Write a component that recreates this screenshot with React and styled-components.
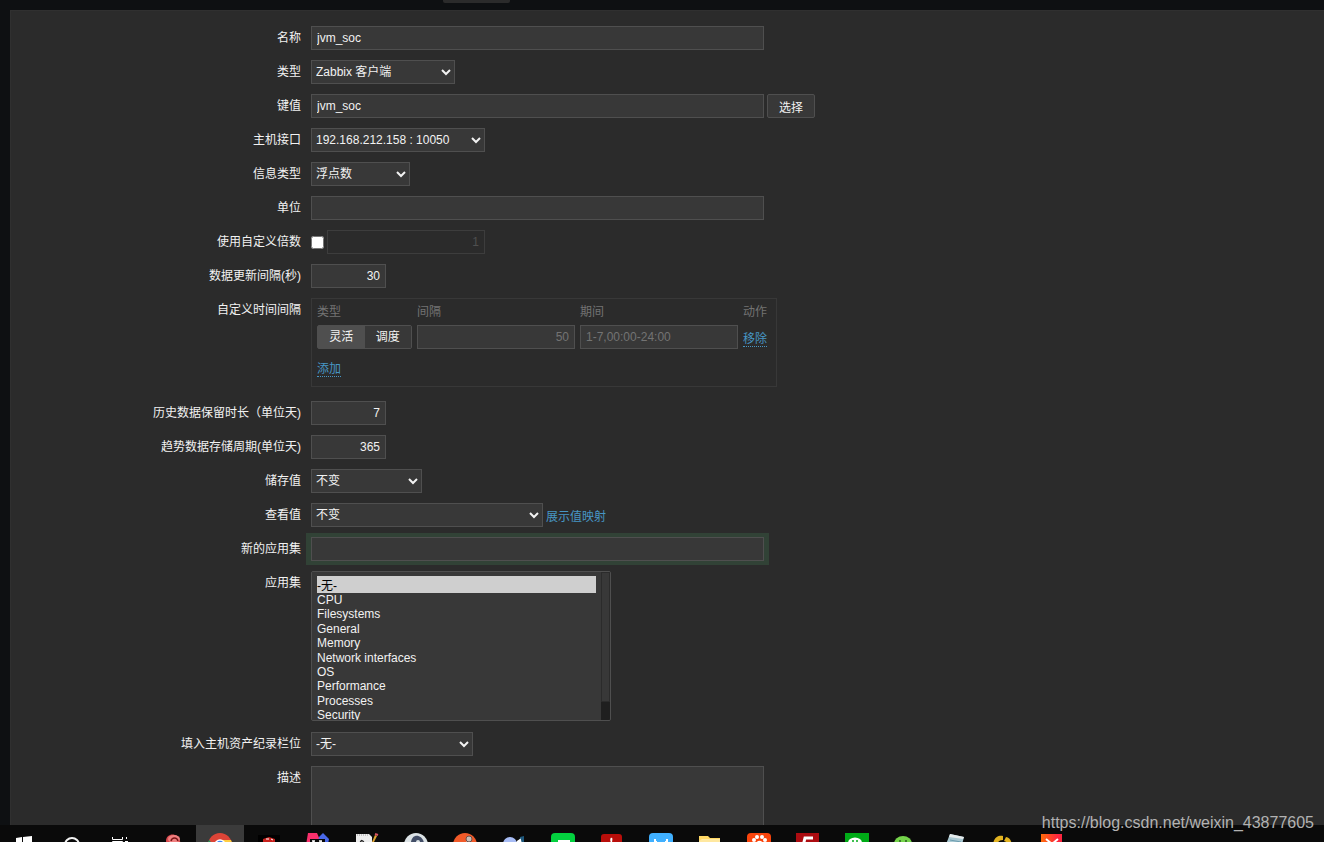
// src/App.jsx
import React from 'react';
import styled, { createGlobalStyle, css } from 'styled-components';

const GlobalStyle = createGlobalStyle`
  *, *::before, *::after {
    box-sizing: border-box;
  }

  body {
    margin: 0;
    background: #0e1012;
    color: #f2f2f2;
    font-family: "Liberation Sans", "Noto Sans CJK SC", sans-serif;
    font-size: 12px;
  }
`;

const Page = styled.div`
  position: relative;
  display: flex;
  flex-direction: column;
  height: 100vh;
  overflow: hidden;
`;

const TabStrip = styled.div`
  flex: none;
  height: 10px;
  padding-left: 443px;
`;

const ActiveTab = styled.div`
  width: 67px;
  height: 3px;
  background: #2b2b2b;
  border-radius: 0 0 2px 2px;
`;

const Panel = styled.main`
  flex: 1;
  min-height: 0;
  margin-left: 10px;
  padding-top: 15px;
  background: #2b2b2b;
  border: solid #303030;
  border-width: 1px 0 0 1px;
  overflow: hidden;
`;

const Form = styled.form`
  display: flex;
  flex-direction: column;
  gap: 10px;
`;

const Row = styled.div`
  display: grid;
  grid-template-columns: 290px 1fr;
  column-gap: 10px;
`;

const labelText = css`
  line-height: 24px;
  text-align: right;
`;

const Label = styled.label`
  ${labelText}
`;

const LabelText = styled.span`
  ${labelText}
`;

const Field = styled.div`
  display: flex;
  align-items: center;
  gap: 3px;
`;

const control = css`
  color: #f2f2f2;
  background: #383838;
  border: 1px solid #4f4f4f;
  border-radius: 0;
  font-family: inherit;
  font-size: 12px;
  outline: 0;
`;

const Input = styled.input`
  ${control}
  width: ${(p) => p.$width}px;
  height: 24px;
  padding: 0 5px;
  text-align: ${(p) => (p.$right ? 'right' : 'left')};

  &::placeholder {
    color: #737373;
  }

  &:disabled {
    color: #4f4f4f;
    background: transparent;
    border-color: #3d3d3d;
  }
`;

const FocusedInput = styled(Input)`
  box-shadow: -1px 0 0 4px #314236, 1px 0 0 4px #314236;
`;

const Select = styled.select`
  ${control}
  width: ${(p) => p.$width}px;
  height: 24px;
  padding: 0 2px 0 0;
`;

const TextArea = styled.textarea`
  ${control}
  display: block;
  width: 453px;
  height: 110px;
  padding: 4px 5px;
  resize: none;
`;

const Checkbox = styled.input`
  width: 13px;
  height: 13px;
  margin: 0;
`;

const Button = styled.button`
  ${control}
  height: 24px;
  padding: 0 11px;
  border-radius: 2px;
`;

const Link = styled.a`
  color: #4796c4;
  text-decoration: none;
`;

const DottedLink = styled(Link)`
  border-bottom: 1px dotted #4796c4;
`;

const ListFrame = styled.div`
  display: flex;
  width: 300px;
  height: 150px;
  margin-bottom: 1px;
  background: #383838;
  border: 1px solid #4f4f4f;
  border-radius: 2px;
  overflow: hidden;
`;

const ListBox = styled.select`
  ${control}
  flex: 1;
  height: 148px;
  padding: 4px 5px;
  border: 0;
  scrollbar-width: none;

  option {
    padding: 0;
    line-height: 14px;
  }

  option:checked {
    color: #000;
    background: #cfcfcf linear-gradient(#cfcfcf, #cfcfcf);
    line-height: 16px;
  }
`;

const ScrollTrack = styled.div`
  width: 9px;
  background: #1f1f1f;
`;

const ScrollThumb = styled.div`
  height: 130px;
  background: #383838;
  border: 1px solid #2b2b2b;
`;

// 自定义时间间隔
const IntervalBox = styled.div`
  width: 466px;
  margin-bottom: 4px;
  padding: 5px 5px 1px;
  border: 1px solid #383838;
`;

const IntervalTable = styled.table`
  border-spacing: 0;

  th,
  td {
    padding: 0 5px 0 0;
    text-align: left;
    white-space: nowrap;
  }

  th {
    height: 21px;
    color: #737373;
    font-weight: normal;
    line-height: 16px;
    vertical-align: top;
  }

  tfoot td {
    height: 36px;
  }
`;

const Segmented = styled.div`
  display: flex;
  width: 95px;
  height: 24px;
  border: 1px solid #4f4f4f;
  border-radius: 2px;
`;

const SegmentLabel = styled.label`
  flex: 1;
  line-height: 22px;
  text-align: center;
  background: #383838;

  &:has(input:checked) {
    background: #4f4f4f;
  }

  input {
    position: absolute;
    appearance: none;
    margin: 0;
  }
`;

// 任务栏
const Taskbar = styled.footer`
  flex: none;
  display: flex;
  gap: 1px;
  height: 17px;
  background: #0a0a0a;
  overflow: hidden;
`;

const SystemItems = styled.div`
  display: flex;
  margin-right: 2px;
`;

const TaskItem = styled.div`
  flex: none;
  width: 48px;
  height: 40px;
  padding: 8px 12px;
  background: ${(p) => (p.$active ? '#3b3b3b' : 'transparent')};

  svg {
    display: block;
  }
`;

const Watermark = styled.div`
  position: absolute;
  right: 10px;
  bottom: 10px;
  color: #b2b2b2;
  font-size: 16px;
  line-height: 18px;
`;

const applications = [
  '-无-',
  'CPU',
  'Filesystems',
  'General',
  'Memory',
  'Network interfaces',
  'OS',
  'Performance',
  'Processes',
  'Security',
  'Zabbix agent',
];

const systemIcons = [
  <>
    <path d="M4 5l6-1v8H4zM11 4l9-1v9h-9zM4 13h6v8l-6-1zM11 13h9v9l-9-1z" fill="#fff" />
  </>,
  <>
    <circle cx="12" cy="12" r="7" fill="none" stroke="#f2f2f2" strokeWidth="2" />
  </>,
  <>
    <path
      d="M4.500 4v2.500h10V4M4.500 20V8.500h10V20M18.500 4v2M17 8.500h3M18.500 10v10"
      fill="none"
      stroke="#fff"
    />
  </>,
];

const apps = [
  {
    icon: (
      <>
        <path d="M7 8c0-8 12-9 14 0l3 12H9z" fill="#d9494d" />
        <ellipse cx="15" cy="6" rx="6" ry="4" fill="#f07f7f" />
        <path d="M12 8c1-4 6-4 7 0" fill="none" stroke="#7a1518" strokeWidth="1.500" />
      </>
    ),
  },
  {
    active: true,
    icon: (
      <>
        <circle cx="12" cy="12" r="12" fill="#dc4437" />
        <path d="M12 7h11a12 12 0 0 1-10 17z" fill="#ffcd41" />
        <path d="M1 7l8 8 3 9A12 12 0 0 1 1 7z" fill="#0f9d58" />
        <circle cx="12" cy="12" r="5" fill="#4285f4" stroke="#fff" strokeWidth="1.500" />
      </>
    ),
  },
  {
    icon: (
      <>
        <path d="M1 2h22v22H1z" fill="#000" />
        <path d="M6 6l6-2 6 2v3l-6 3-6-3z" fill="#c8201c" />
        <path d="M9 6h3M14 6l2 1" stroke="#fff" strokeWidth="1" />
      </>
    ),
  },
  {
    icon: (
      <>
        <path d="M2 0h9l4 9-6 12-9-9z" fill="#f9306c" />
        <path d="M13 4l4-4 6 6-3 15-9-9z" fill="#4968e8" />
        <path d="M4 6h15v15H4z" fill="#080808" />
        <path d="M6 8h3M7.500 8v5M13 8h3M15 8v5" stroke="#fff" strokeWidth="1.300" />
      </>
    ),
  },
  {
    icon: (
      <>
        <path d="M1 1h13l3 3v19H1z" fill="#ededed" />
        <path d="M2 2h12" stroke="#9a9a9a" strokeDasharray="1 1" />
        <path d="M5 13c0-8 4-6 4-1" fill="none" stroke="#222" strokeWidth="1.500" />
        <path d="M20 2l2 1-6 12-2 1z" fill="#dea331" />
        <path d="M20 1l3 1" stroke="#d95363" strokeWidth="2" />
      </>
    ),
  },
  {
    icon: (
      <>
        <circle cx="12" cy="12" r="12" fill="#dce3e6" />
        <path d="M7 12c-1-12 11-12 13-2l1 10H10z" fill="#434e67" />
        <circle cx="14" cy="9" r="2" fill="#dce3e6" />
      </>
    ),
  },
  {
    icon: (
      <>
        <circle cx="12" cy="12" r="12" fill="#f15a29" />
        <circle cx="16" cy="6" r="3" fill="#c8bdb7" stroke="#69504b" />
        <path d="M14 9l-8 7" stroke="#fff" strokeWidth="1.500" />
      </>
    ),
  },
  {
    icon: (
      <>
        <circle cx="8" cy="11" r="7" fill="#a7bcf5" />
        <path d="M18 4l4-1v8h-5z" fill="#1f587c" />
        <path d="M15 9l3-2 1 4" stroke="#fff" strokeWidth="2" fill="none" />
      </>
    ),
  },
  {
    icon: (
      <>
        <rect width="24" height="24" rx="4" fill="#03d13f" />
        <path d="M7 8h12M6 11h12" stroke="#fff" strokeWidth="2" />
      </>
    ),
  },
  {
    icon: (
      <>
        <rect x="1" y="1" width="21" height="22" rx="3" fill="#b80e0a" />
        <path
          d="M11.500 5c-2 2 1 4 0 8-2 4-5 5-6 6M11.500 5c1 2-1 4 0 8l6 4"
          fill="none"
          stroke="#fff"
          strokeWidth="1.300"
        />
      </>
    ),
  },
  {
    icon: (
      <>
        <rect width="24" height="24" rx="4" fill="#40b0ff" />
        <path d="M6 6v6M18 6v6M6 9h2M16 9h2" stroke="#fff" strokeWidth="2" />
      </>
    ),
  },
  {
    icon: (
      <>
        <path d="M1 3h9l2 2h10v17H1z" fill="#ffd864" />
        <path d="M4 6h18v16H1V8z" fill="#ffe8a0" />
      </>
    ),
  },
  {
    icon: (
      <>
        <rect width="24" height="24" rx="4" fill="#fa440b" />
        <circle cx="7" cy="7" r="2" fill="#fff" />
        <circle cx="10" cy="4" r="2" fill="#fff" />
        <circle cx="15" cy="4" r="2" fill="#fff" />
        <circle cx="18" cy="7" r="2" fill="#fff" />
        <path d="M6 16c3-11 10-11 13 0z" fill="#fff" />
      </>
    ),
  },
  {
    icon: (
      <>
        <rect width="23" height="24" fill="#ac0c11" />
        <path d="M17 5H9l-2 8h8" fill="none" stroke="#fff" strokeWidth="3" />
      </>
    ),
  },
  {
    icon: (
      <>
        <rect width="24" height="24" fill="#00ab17" />
        <ellipse cx="10" cy="10" rx="7" ry="5.500" fill="#fff" />
        <circle cx="8" cy="8" r="1" fill="#00ab17" />
        <circle cx="12" cy="8" r="1" fill="#00ab17" />
      </>
    ),
  },
  {
    icon: (
      <>
        <ellipse cx="9" cy="11" rx="9" ry="8" fill="#75d44b" />
        <circle cx="6" cy="8" r="1" fill="#29621c" />
        <circle cx="12" cy="8" r="1" fill="#29621c" />
      </>
    ),
  },
  {
    icon: (
      <>
        <path d="M7 1l14 3-5 19L0 19z" fill="#a9c8d2" />
        <path d="M7 1l14 3-1 2L6 4z" fill="#e6ebec" />
        <path d="M7 7l11 2" stroke="#6b9caf" />
      </>
    ),
  },
  {
    icon: (
      <>
        <path
          d="M1 13C1 5 6 2 11 3v4C6 7 5 10 5 15zM14 4c4 0 6 5 6 10l-4 3c1-5 0-8-4-9z"
          fill="#e2b321"
        />
      </>
    ),
  },
  {
    icon: (
      <>
        <defs>
          <linearGradient id="redApp">
            <stop stopColor="#ff6b0a" />
            <stop offset="0.8" stopColor="#fc263f" />
          </linearGradient>
        </defs>
        <rect y="1" width="21" height="23" fill="url(#redApp)" />
        <path d="M5 6l6 5 6-5" fill="none" stroke="#fff" strokeWidth="2" />
      </>
    ),
  },
];

function FormRow({ label, htmlFor, children }) {
  return (
    <Row>
      {htmlFor ? <Label htmlFor={htmlFor}>{label}</Label> : <LabelText>{label}</LabelText>}
      <Field>{children}</Field>
    </Row>
  );
}

function SelectField({ id, width, value }) {
  return (
    <Select id={id} $width={width}>
      <option>{value}</option>
    </Select>
  );
}

function TaskIcon({ children }) {
  return (
    <svg width="24" height="24" viewBox="0 0 24 24" aria-hidden="true">
      {children}
    </svg>
  );
}

export default function App() {
  return (
    <Page>
      <GlobalStyle />
      <TabStrip>
        <ActiveTab />
      </TabStrip>

      <Panel>
        <Form>
          <FormRow label="名称" htmlFor="name">
            <Input id="name" $width={453} defaultValue="jvm_soc" />
          </FormRow>
          <FormRow label="类型" htmlFor="type">
            <SelectField id="type" width={144} value="Zabbix 客户端" />
          </FormRow>
          <FormRow label="键值" htmlFor="key">
            <Input id="key" $width={453} defaultValue="jvm_soc" />
            <Button type="button">选择</Button>
          </FormRow>
          <FormRow label="主机接口" htmlFor="interface">
            <SelectField id="interface" width={174} value="192.168.212.158 : 10050" />
          </FormRow>
          <FormRow label="信息类型" htmlFor="value_type">
            <SelectField id="value_type" width={99} value="浮点数" />
          </FormRow>
          <FormRow label="单位" htmlFor="units">
            <Input id="units" $width={453} />
          </FormRow>
          <FormRow label="使用自定义倍数" htmlFor="multiplier">
            <Checkbox id="multiplier" type="checkbox" />
            <Input $width={158} $right defaultValue="1" aria-label="倍数" disabled />
          </FormRow>
          <FormRow label="数据更新间隔(秒)" htmlFor="delay">
            <Input id="delay" $width={75} $right defaultValue="30" />
          </FormRow>

          {/* 自定义时间间隔 */}
          <FormRow label="自定义时间间隔">
            <IntervalBox>
              <IntervalTable>
                <thead>
                  <tr>
                    <th>类型</th>
                    <th>间隔</th>
                    <th>期间</th>
                    <th>动作</th>
                  </tr>
                </thead>
                <tbody>
                  <tr>
                    <td>
                      <Segmented>
                        <SegmentLabel>
                          <input type="radio" name="interval_type" defaultChecked />
                          灵活
                        </SegmentLabel>
                        <SegmentLabel>
                          <input type="radio" name="interval_type" />
                          调度
                        </SegmentLabel>
                      </Segmented>
                    </td>
                    <td>
                      <Input $width={158} $right placeholder="50" aria-label="间隔" />
                    </td>
                    <td>
                      <Input $width={158} placeholder="1-7,00:00-24:00" aria-label="期间" />
                    </td>
                    <td>
                      <DottedLink href="#remove">移除</DottedLink>
                    </td>
                  </tr>
                </tbody>
                <tfoot>
                  <tr>
                    <td colSpan="4">
                      <DottedLink href="#add">添加</DottedLink>
                    </td>
                  </tr>
                </tfoot>
              </IntervalTable>
            </IntervalBox>
          </FormRow>

          <FormRow label="历史数据保留时长（单位天)" htmlFor="history">
            <Input id="history" $width={75} $right defaultValue="7" />
          </FormRow>
          <FormRow label="趋势数据存储周期(单位天)" htmlFor="trends">
            <Input id="trends" $width={75} $right defaultValue="365" />
          </FormRow>
          <FormRow label="储存值" htmlFor="delta">
            <SelectField id="delta" width={111} value="不变" />
          </FormRow>
          <FormRow label="查看值" htmlFor="valuemap">
            <SelectField id="valuemap" width={232} value="不变" />
            <Link href="#valuemaps">展示值映射</Link>
          </FormRow>
          <FormRow label="新的应用集" htmlFor="new_application">
            <FocusedInput id="new_application" $width={453} />
          </FormRow>
          <FormRow label="应用集" htmlFor="applications">
            <ListFrame>
              <ListBox id="applications" multiple size={10} defaultValue={['-无-']}>
                {applications.map((name) => (
                  <option key={name} value={name}>
                    {name}
                  </option>
                ))}
              </ListBox>
              <ScrollTrack>
                <ScrollThumb />
              </ScrollTrack>
            </ListFrame>
          </FormRow>
          <FormRow label="填入主机资产纪录栏位" htmlFor="inventory">
            <SelectField id="inventory" width={162} value="-无-" />
          </FormRow>
          <FormRow label="描述" htmlFor="description">
            <TextArea id="description" />
          </FormRow>
        </Form>
      </Panel>

      {/* 任务栏 */}
      <Taskbar>
        <SystemItems>
          {systemIcons.map((icon, i) => (
            <TaskItem key={i}>
              <TaskIcon>{icon}</TaskIcon>
            </TaskItem>
          ))}
        </SystemItems>
        {apps.map((app, i) => (
          <TaskItem key={i} $active={app.active}>
            <TaskIcon>{app.icon}</TaskIcon>
          </TaskItem>
        ))}
      </Taskbar>

      <Watermark>https://blog.csdn.net/weixin_43877605</Watermark>
    </Page>
  );
}
